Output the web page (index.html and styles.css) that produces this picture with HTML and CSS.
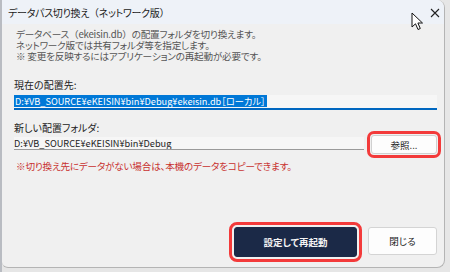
FILE: index.html
```html
<!DOCTYPE html>
<html lang="ja">
<head>
<meta charset="utf-8">
<link rel="stylesheet" href="styles.css">
</head>
<body>
<div class="window">
  <div class="titlebar">
    <span class="title">データパス切り換え<span class="fw">（</span>ネットワーク版<span class="fw">）</span></span>
    <svg class="close" width="10" height="10" viewBox="0 0 10 10"><path d="M1 1L9 9M9 1L1 9" stroke="#222" stroke-width="1.1" fill="none"/></svg>
  </div>
  <div class="content">
    <div class="desc">
      <div class="line">データベース<span class="fw">（</span>ekeisin.db<span class="fw">）</span>の配置フォルダを切り換えます。</div>
      <div class="line">ネットワーク版では共有フォルダ等を指定します。</div>
      <div class="line">※ 変更を反映するにはアプリケーションの再起動が必要です。</div>
    </div>
    <div class="label first">現在の配置先:</div>
    <div class="field current"><span class="sel">D:¥VB_SOURCE¥eKEISIN¥bin¥Debug¥ekeisin.db［ローカル］</span></div>
    <div class="label second">新しい配置フォルダ:</div>
    <div class="row">
      <div class="field newpath">D:¥VB_SOURCE¥eKEISIN¥bin¥Debug</div>
      <button class="btn browse">参照...</button>
    </div>
    <p class="note">※切り換え先にデータがない場合は、本機のデータをコピーできます。</p>
    <div class="footer">
      <button class="btn primary">設定して再起動</button>
      <button class="btn close-btn">閉じる</button>
    </div>
  </div>
</div>
<svg class="cursor" width="13" height="20" viewBox="0 0 13 20"><path d="M1 1L1 15L4.5 11.8L7 17.5L9.3 16.5L6.9 11L11.5 11Z" fill="#fff" stroke="#111" stroke-width="1" stroke-linejoin="round"/></svg>
</body>
</html>
```
FILE: styles.css
```css
* { box-sizing: border-box; }
html, body { margin: 0; padding: 0; }
body {
  width: 450px;
  height: 272px;
  background: #e6e6e6;
  font-family: "Noto Sans CJK JP", "Noto Sans", sans-serif;
  font-feature-settings: "palt";
  position: relative;
  overflow: hidden;
  border-left: 2px solid #b9bcc2;
}
.fw { font-feature-settings: normal; }
.window {
  width: 443px;
  height: 268px;
  background: #f0f0f0;
  border: 1px solid #b4b4b4;
  border-left: none;
  border-top: none;
  border-radius: 0 8px 8px 6px;
  display: flex;
  flex-direction: column;
  overflow: hidden;
}
.titlebar {
  height: 24px;
  background: #eef2f8;
  display: flex;
  align-items: center;
  padding: 0 0 0 6px;
  flex: none;
}
.title {
  font-size: 10px;
  color: #1a1a1a;
  letter-spacing: -0.3px;
  flex: 1;
}
.close { margin-right: 4px; margin-top: 1px; }
.content {
  flex: 1;
  display: flex;
  flex-direction: column;
  padding: 5px 7px 10px 12px;
}
.desc {
  margin: 0 0 0 2px;
  font-size: 9.6px;
  color: #555;
  letter-spacing: -0.2px;
}
.line {
  height: 11px;
  line-height: 11px;
  white-space: nowrap;
}
.label {
  font-size: 10px;
  line-height: 14px;
  color: #222;
}
.label.first { margin-top: 16px; }
.label.second { margin-top: 11px; }
.field {
  font-size: 9.2px;
  color: #222;
  background: #f6f6f6;
  white-space: nowrap;
  overflow: hidden;
}
.current {
  margin-top: 3px;
  height: 15px;
  line-height: 12px;
  border-bottom: 2px solid #0067c0;
}
.sel {
  background: #0078d7;
  color: #fff;
  padding: 0 1px;
  display: inline-block;
  line-height: 12px;
}
.row {
  display: flex;
  align-items: flex-start;
  gap: 7px;
}
.newpath {
  flex: 1;
  margin-top: 2px;
  height: 13px;
  line-height: 12px;
  border-bottom: 1px solid #9a9a9a;
}
.btn {
  font-family: inherit;
  font-feature-settings: "palt";
  font-size: 9.5px;
  border-radius: 3px;
  padding: 0;
  cursor: default;
}
.browse {
  width: 66px;
  height: 19px;
  background: #fdfdfd;
  border: 1px solid #d0d0d0;
  color: #222;
  outline: 3px solid #f33a3a;
  outline-offset: 1px;
}
.note {
  margin: 6px 0 0 2px;
  font-size: 9.6px;
  line-height: 12px;
  color: #c8312f;
  letter-spacing: -0.2px;
}
.footer {
  margin-top: auto;
  display: flex;
  justify-content: flex-end;
  align-items: flex-start;
  gap: 11px;
}
.primary {
  width: 123px;
  height: 30px;
  background: #1b2947;
  border: 1px solid #1b2947;
  color: #f4f4f4;
  font-weight: bold;
  outline: 3px solid #f33a3a;
  outline-offset: 2px;
}
.close-btn {
  width: 69px;
  height: 28px;
  background: #fdfdfd;
  border: 1px solid #d4d4d4;
  color: #222;
}
.cursor {
  position: absolute;
  left: 409px;
  top: 12px;
}
```
